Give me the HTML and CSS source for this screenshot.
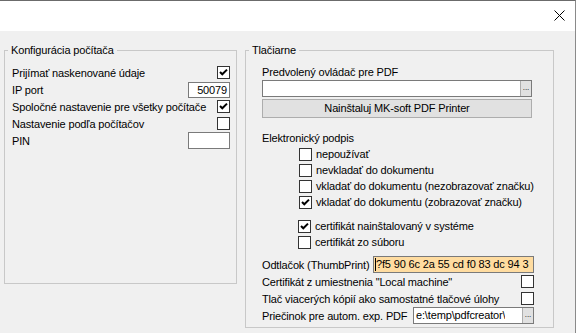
FILE: index.html
```html
<!DOCTYPE html>
<html lang="sk">
<head>
  <meta charset="UTF-8" />
  <title>Nastavenia</title>
  <link rel="stylesheet" href="styles.css">
</head>
<body>
  <div class="window">
    <div class="titlebar">
      <svg class="close" width="11" height="11" viewBox="0 0 11 11">
        <path d="M0.5 0.5 L10.5 10.5 M10.5 0.5 L0.5 10.5" stroke="#000" stroke-width="1" fill="none"/>
      </svg>
    </div>

    <div class="content">
      <fieldset class="group group-pc">
        <legend>Konfigurácia počítača</legend>
        <div class="row">
          <span>Prijímať naskenované údaje</span>
          <span class="check"><svg width="11" height="11" viewBox="0 0 11 11"><path d="M2 5 L4.3 7.3 L9 2.6" stroke="#000" stroke-width="2" fill="none"/></svg></span>
        </div>
        <div class="row">
          <span>IP port</span>
          <span class="field">50079</span>
        </div>
        <div class="row">
          <span>Spoločné nastavenie pre všetky počítače</span>
          <span class="check"><svg width="11" height="11" viewBox="0 0 11 11"><path d="M2 5 L4.3 7.3 L9 2.6" stroke="#000" stroke-width="2" fill="none"/></svg></span>
        </div>
        <div class="row">
          <span>Nastavenie podľa počítačov</span>
          <span class="check"></span>
        </div>
        <div class="row">
          <span>PIN</span>
          <span class="field field-tall"></span>
        </div>
      </fieldset>

      <fieldset class="group group-print">
        <legend>Tlačiarne</legend>
        <div class="label">Predvolený ovládač pre PDF</div>
        <div class="combo">
          <span class="dots">...</span>
        </div>
        <div class="button">Nainštaluj MK-soft PDF Printer</div>

        <div class="sign-title">Elektronický podpis</div>
        <div class="opts">
          <div class="opt"><span class="check"></span><span>nepoužívať</span></div>
          <div class="opt"><span class="check"></span><span>nevkladať do dokumentu</span></div>
          <div class="opt"><span class="check"></span><span>vkladať do dokumentu (nezobrazovať značku)</span></div>
          <div class="opt"><span class="check"><svg width="11" height="11" viewBox="0 0 11 11"><path d="M2 5 L4.3 7.3 L9 2.6" stroke="#000" stroke-width="2" fill="none"/></svg></span><span>vkladať do dokumentu (zobrazovať značku)</span></div>
        </div>
        <div class="opts opts-cert">
          <div class="opt"><span class="check"><svg width="11" height="11" viewBox="0 0 11 11"><path d="M2 5 L4.3 7.3 L9 2.6" stroke="#000" stroke-width="2" fill="none"/></svg></span><span>certifikát nainštalovaný v systéme</span></div>
          <div class="opt"><span class="check"></span><span>certifikát zo súboru</span></div>
        </div>

        <div class="bottom">
          <div class="row">
            <span>Odtlačok (ThumbPrint)</span>
            <span class="thumb"><span class="caret"></span>?f5 90 6c 2a 55 cd f0 83 dc 94 3</span>
          </div>
          <div class="row">
            <span>Certifikát z umiestnenia "Local machine"</span>
            <span class="check"></span>
          </div>
          <div class="row">
            <span>Tlač viacerých kópií ako samostatné tlačové úlohy</span>
            <span class="check"></span>
          </div>
          <div class="row">
            <span>Priečinok pre autom. exp. PDF</span>
            <span class="path"><span class="path-text">e:\temp\pdfcreator\</span><span class="dots">...</span></span>
          </div>
        </div>
      </fieldset>
    </div>
  </div>
</body>
</html>
```

FILE: styles.css
```css
* {
  box-sizing: border-box;
}
body {
  margin: 0;
  font-family: "Liberation Sans", Arial, sans-serif;
  font-size: 11px;
  letter-spacing: -0.15px;
  color: #000;
  background: #f0f0f0;
}
.window {
  width: 576px;
  height: 333px;
  background: #f0f0f0;
  border-top: 1px solid #6b6b6b;
  border-right: 1px solid #8a8a8a;
  overflow: hidden;
}
.titlebar {
  height: 30px;
  background: #fff;
  display: flex;
  justify-content: flex-end;
  align-items: flex-start;
  padding: 9px 10px 0 0;
}
.close {
  display: block;
}
.content {
  display: flex;
  align-items: flex-start;
  gap: 8px;
  padding: 13px 0 0 4px;
}
fieldset {
  margin: 0;
  min-width: 0;
  border: 1px solid #c8c8c8;
}
legend {
  padding: 0 3px;
  line-height: 13px;
}
.group-pc {
  width: 233px;
  height: 240px;
  padding: 7px 6px 0 7px;
}
.group-pc legend {
  margin-left: -4px;
}
.group-print {
  width: 309px;
  height: 284px;
  padding: 7px 19px 0 16px;
}
.group-print legend {
  margin-left: -13px;
}
.row {
  display: flex;
  align-items: center;
  justify-content: space-between;
  height: 17px;
  white-space: nowrap;
}
.check {
  width: 13px;
  height: 13px;
  flex: none;
  border: 1px solid #333;
  background: #fff;
}
.check svg {
  display: block;
}
.field {
  width: 42px;
  height: 16px;
  border: 1px solid #7a7a7a;
  background: #fff;
  text-align: right;
  padding: 0 2px;
  line-height: 14px;
}
.field-tall {
  height: 17px;
}
.label {
  height: 16px;
  line-height: 16px;
}
.combo {
  display: flex;
  width: 270px;
  height: 17px;
  border: 1px solid #7a7a7a;
  background: #fff;
}
.dots {
  margin-left: auto;
  width: 11px;
  flex: none;
  background: #e1e1e1;
  border-left: 1px solid #adadad;
  font-size: 8px;
  letter-spacing: 0;
  line-height: 13px;
  text-align: center;
}
.button {
  margin-top: 2px;
  width: 270px;
  height: 19px;
  border: 1px solid #adadad;
  background: #e1e1e1;
  text-align: center;
  line-height: 17px;
}
.sign-title {
  margin-top: 12px;
  line-height: 16px;
}
.opts {
  padding-left: 37px;
}
.opts-cert {
  margin-top: 8px;
  padding-left: 36px;
}
.opt {
  display: flex;
  align-items: center;
  gap: 4px;
  height: 16px;
  white-space: nowrap;
}
.bottom {
  margin-top: 6px;
}
.thumb {
  width: 161px;
  height: 17px;
  border: 1px solid #7a7a7a;
  background: #ffdca0;
  overflow: hidden;
  white-space: nowrap;
  padding-left: 1px;
  line-height: 15px;
  display: flex;
  align-items: center;
}
.caret {
  width: 1px;
  height: 13px;
  background: #000;
  flex: none;
}
.path {
  display: flex;
  width: 121px;
  height: 17px;
  border: 1px solid #7a7a7a;
  background: #fff;
}
.path-text {
  padding-left: 2px;
  line-height: 15px;
  overflow: hidden;
}
```
